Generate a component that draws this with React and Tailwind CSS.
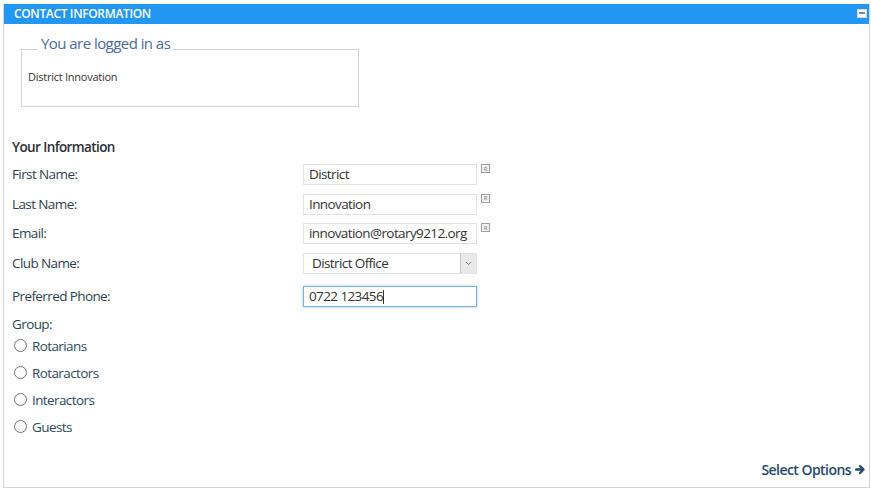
import React from 'react';

const font = { fontFamily: '"Open Sans", "Noto Sans", sans-serif' };

function ReqIcon() {
    return (
        <span className="ml-[4px] w-[9px] h-[9px] border border-[#9aa0a6] bg-[#f2f2f2] flex items-center justify-center text-[6px] leading-none text-[#777] self-start">
            R
        </span>
    );
}

function Row({ label, children, icon, h = 'h-[29.5px]' }) {
    return (
        <div className={`flex items-center ${h}`}>
            <div className="w-[291px] text-[13.5px] tracking-[-0.6px] text-[#2e3f4f]">{label}</div>
            <div className="flex items-start">
                {children}
                {icon && <ReqIcon />}
            </div>
        </div>
    );
}

function TextBox({ value, focus }) {
    return (
        <div className={`w-[174px] h-[21px] px-[5px] flex items-center text-[13.5px] tracking-[-0.6px] text-[#333] bg-white border ${focus ? 'border-[#7aaee0] shadow-[0_0_3px_#a6c8ec]' : 'border-[#dde3e8]'}`}>
            {value}
            {focus && <span className="w-px h-[14px] bg-[#333]" />}
        </div>
    );
}

export default function App() {
    return (
        <div className="w-[871px] h-[490px] bg-white pt-[4px] pl-[3px] pr-[1px]" style={font}>
            <div className="h-[484px] border-l border-r border-b border-[#cfd6dc] flex flex-col">
                <div className="h-[20px] bg-[#2196f3] flex items-center justify-between pl-[10px] pr-[2px]">
                    <span className="text-white text-[12px] font-semibold tracking-[-0.35px]">CONTACT INFORMATION</span>
                    <span className="w-[10px] h-[9px] bg-white border border-[#d0d7de] flex items-center justify-center mb-[2px]">
                        <span className="w-[6px] h-[2px] bg-[#7a8590]" />
                    </span>
                </div>

                <div className="flex-1 flex flex-col px-[8px]">
                    <fieldset className="ml-[9px] mt-[10px] w-[338px] h-[73px] border border-[#cfd4d9] px-[6px] pb-0 m-0">
                        <legend className="ml-[10px] px-[3px] pb-[12px] text-[15px] tracking-[-0.55px] text-[#4c6a9c] leading-[18px]">You are logged in as</legend>
                        <div className="text-[11px] tracking-[-0.25px] text-[#333] mt-[5px]">District Innovation</div>
                    </fieldset>

                    <div className="mt-[30px] text-[13.5px] tracking-[-0.6px] font-semibold text-[#2e3036]">Your Information</div>
                    <div className="mt-[2.5px] flex flex-col">
                        <Row label="First Name:" icon><TextBox value="District" /></Row>
                        <Row label="Last Name:" icon><TextBox value="Innovation" /></Row>
                        <Row label="Email:" icon><TextBox value="innovation@rotary9212.org" /></Row>
                        <Row label="Club Name:">
                            <div className="w-[174px] h-[21px] pl-[8px] flex items-center justify-between text-[13.5px] tracking-[-0.6px] text-[#333] bg-white border border-[#dde3e8]">
                                District Office
                                <span className="w-[16px] h-[19px] bg-[#e8e8e8] border-l border-[#c8c8c8] flex items-center justify-center">
                                    <svg width="7" height="5" viewBox="0 0 7 5"><path d="M1 1l2.5 2.5L6 1" fill="none" stroke="#777" strokeWidth="1" /></svg>
                                </span>
                            </div>
                        </Row>
                        <Row label="Preferred Phone:" h="h-[37.5px]"><TextBox value="0722 123456" focus /></Row>
                    </div>

                    <div className="h-[18px] leading-[18px] text-[13.5px] tracking-[-0.6px] text-[#2e3f4f]">Group:</div>
                    <div className="mt-[-1px] flex flex-col">
                        {['Rotarians', 'Rotaractors', 'Interactors', 'Guests'].map((g) => (
                            <label key={g} className="flex items-center h-[27px] text-[13.5px] tracking-[-0.6px] text-[#2e4a60]">
                                <span className="ml-[2px] mr-[5px] w-[13px] h-[13px] rounded-full border border-[#707070] bg-white" />
                                {g}
                            </label>
                        ))}
                    </div>

                    <div className="mt-auto mb-[7px] -mr-[5px] flex justify-end items-center text-[14px] tracking-[-0.55px] font-semibold text-[#234a6e]">
                        Select Options
                        <svg className="ml-[4px]" width="11" height="11" viewBox="0 0 11 11">
                            <path d="M1.2 5.5h7M5 2l3.5 3.5L5 9" fill="none" stroke="#234a6e" strokeWidth="2.4" strokeLinecap="round" strokeLinejoin="round" />
                        </svg>
                    </div>
                </div>
            </div>
        </div>
    );
}
